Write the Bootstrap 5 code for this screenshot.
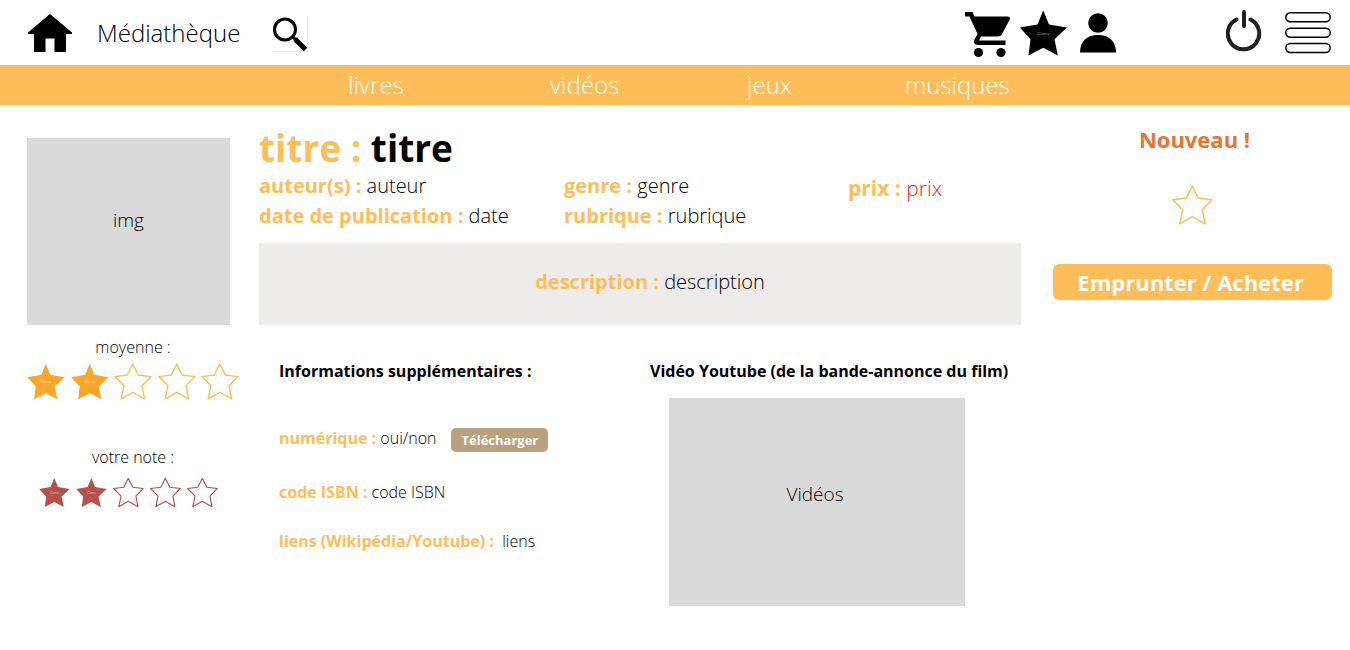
<!DOCTYPE html>
<html lang="fr">
<head>
<meta charset="utf-8">
<meta name="viewport" content="width=device-width, initial-scale=1">
<title>Médiathèque</title>
<link href="https://cdn.jsdelivr.net/npm/bootstrap@5.3.0/dist/css/bootstrap.min.css" rel="stylesheet">
<style>
  :root { --amber: #ffbd59; }
  body { font-family: "Open Sans", sans-serif; font-weight: 300; color: #000; background: #fff; }
  strong, h1, h2 { font-weight: 700; }
  svg { display: block; }
  a { color: inherit; text-decoration: none; }
  .icon-btn { border: 0; padding: 0; background: none; color: #000; }
  .topbar { height: 65px; padding: 0 19px 0 28px; }
  .brand-name { font-size: 24px; margin: 0 33px 0 25px; }
  .power { margin: 0 23px 0 110px; }
  .rubrics { background: var(--amber); color: #fff; font-size: 24px; line-height: 40px;
    display: grid; grid-template-columns: 348fr 202fr 197fr 158fr 445fr; }
  .rubrics a:first-child { grid-column: 2; }
  .page { padding: 20px 18px 40px 27px; }
  .side { width: 212px; margin-right: 20px; padding-top: 13px; }
  .placeholder-box { background: #d9d9d9; display: flex; align-items: center; justify-content: center; }
  .cover { width: 203px; height: 187px; font-size: 19px; padding-bottom: 22px; }
  .small-text { font-size: 16px; line-height: 24px; }
  .average { margin-top: 10px; }
  .own { margin-top: 45px; }
  .amber { color: var(--amber); }
  .gold { color: #f9a62b; }
  .brick, .icon-btn.brick { color: #b5514a; }
  .icon-btn.amber { color: var(--amber); }
  .own-stars { width: 179px; margin-left: 12px; }
  .main-title { font-size: 37px; line-height: 46px; }
  .facts { display: grid; grid-template-columns: 305fr 284fr 173fr; font-size: 20px; line-height: 30px; }
  .price { color: #ff1616; font-size: 21px; line-height: 34px; }
  .summary { background: #edecea; height: 82px; font-size: 20px; padding: 0 0 4px 20px; margin-top: 12px; }
  .lower { display: grid; grid-template-columns: 371fr 371fr; padding-left: 20px; padding-top: 34px; }
  .lower h2 { font-size: 16px; line-height: 24px; margin-bottom: 15px; }
  .extra { display: grid; gap: 25px; padding-top: 26px; }
  .digital { padding-bottom: 3px; }
  .video { width: 296px; height: 208px; margin-left: 19px; font-size: 19px; padding: 0 4px 16px 0; }
  .actions { width: 279px; margin-left: 32px; padding: 1px 0 0; }
  .new-tag { color: #e77432; font-size: 22px; line-height: 26px; padding-left: 4px; }
  .favourite { margin: 33px 0 39px; }
  .icon-btn.buy { background: var(--amber); color: #fff; font-size: 22px; line-height: 36px; border-radius: 6px; padding-right: 4px; }
  .icon-btn.download { background: #b9a17e; color: #fff; font-size: 13px; line-height: 24px; padding: 0 10px; border-radius: 5px; margin: 4px 0 0 15px; }
</style>
</head>
<body>
<svg class="d-none" aria-hidden="true">
  <symbol id="star-full" viewBox="0 0 48 46">
    <path fill="currentColor" d="M23.7.5 29.5 14.5 47.5 17.5 35 29.3 38.3 45.5 23.7 37.7 9 45.5 11 29.3.3 17.5 18 14.5Z"/>
    <text x="24" y="25" text-anchor="middle" font-family="Liberation Serif, serif" font-style="italic" font-size="5" fill="#fff" fill-opacity=".6">Canva</text>
  </symbol>
  <symbol id="star-line" viewBox="0 0 41 40">
    <path fill="none" stroke="currentColor" stroke-width="1.5" stroke-linejoin="round" d="M20.2 1.2 26.2 13 40 14.7 30.3 24.7 33 38.8 20.2 31.7 7.7 38.8 10.7 24.7.8 14.7 14.3 13Z"/>
  </symbol>
</svg>

<header>
  <div class="topbar d-flex align-items-center">
    <a href="#" aria-label="Accueil"><svg width="44" height="38" viewBox="0 0 44 38"><path d="M22 0 44 18.5V20H38V38H26.500V24.500H17.500V38H6V20H0V18.500Z"/></svg></a>
    <a href="#" class="brand-name">Médiathèque</a>
    <button type="button" class="icon-btn pt-1" aria-label="Rechercher"><svg width="36" height="36" viewBox="0 0 36 36"><path d="M34.500 0V34.500H0" fill="none" stroke="#eee"/><circle cx="12" cy="12.500" r="10.500" fill="none" stroke="#000" stroke-width="3"/><path d="M19 19 23 23" stroke="#000" stroke-width="3"/><path d="M22 22 32.500 32.500" stroke="#000" stroke-width="5"/></svg></button>
    <nav class="d-flex align-items-center ms-auto" aria-label="Compte">
      <a href="#" class="pt-1" aria-label="Panier"><svg width="46" height="46" viewBox="0 0 46 46"><path d="M0 0H7.500L9.500 4.500H43Q46 5 44.500 8L37 22Q36 24.500 33 24.500H16L14 28.500H40.500V33H13Q7.500 32.500 9.500 27.500L12.500 22 4.500 4.500H0Z"/><circle cx="13.500" cy="40.500" r="4.600"/><circle cx="36" cy="40.500" r="4.600"/></svg></a>
      <a href="#" class="ms-2" aria-label="Favoris"><svg width="49" height="46"><use href="#star-full"/></svg></a>
      <a href="#" class="ms-2 ps-1" aria-label="Profil"><svg width="36" height="40" viewBox="0 0 36 40"><circle cx="18" cy="10" r="9.800"/><path d="M0 39.500C0 28 7 22 18 22S36 28 36 39.500Z"/></svg></a>
      <button type="button" class="icon-btn power pb-1" aria-label="Déconnexion"><svg width="36" height="42" viewBox="0 0 36 42"><path d="M10.500 9.500A15.700 15.700 0 1 0 24.500 9.500M18 2V16" fill="none" stroke="#231f20" stroke-width="4" stroke-linecap="round"/></svg></button>
      <button type="button" class="icon-btn" aria-label="Menu"><svg width="46" height="42" viewBox="0 0 46 42"><g fill="none" stroke="#000" stroke-width="1.500"><rect x=".8" y=".8" width="44.400" height="9" rx="4.500"/><rect x=".8" y="16.300" width="44.400" height="9" rx="4.500"/><rect x=".8" y="31.500" width="44.400" height="9" rx="4.500"/></g></svg></button>
    </nav>
  </div>
  <nav class="rubrics" aria-label="Rubriques">
    <a href="#">livres</a><a href="#">vidéos</a><a href="#">jeux</a><a href="#">musiques</a>
  </nav>
</header>

<main class="page d-flex">
  <aside class="side flex-shrink-0">
    <div class="placeholder-box cover">img</div>
    <div class="small-text text-center average">moyenne :</div>
    <div class="d-flex justify-content-between mt-1" role="img" aria-label="2 sur 5">
      <svg width="38" height="37" class="gold"><use href="#star-full"/></svg>
      <svg width="38" height="37" class="gold"><use href="#star-full"/></svg>
      <svg width="38" height="37" class="amber"><use href="#star-line"/></svg>
      <svg width="38" height="37" class="amber"><use href="#star-line"/></svg>
      <svg width="38" height="37" class="amber"><use href="#star-line"/></svg>
    </div>
    <div class="small-text text-center own">votre note :</div>
    <div class="own-stars d-flex justify-content-between mt-2" role="group" aria-label="Votre note">
      <button type="button" class="icon-btn brick" aria-label="1 étoile"><svg width="31" height="31"><use href="#star-full"/></svg></button>
      <button type="button" class="icon-btn brick" aria-label="2 étoiles"><svg width="31" height="31"><use href="#star-full"/></svg></button>
      <button type="button" class="icon-btn brick" aria-label="3 étoiles"><svg width="31" height="31"><use href="#star-line"/></svg></button>
      <button type="button" class="icon-btn brick" aria-label="4 étoiles"><svg width="31" height="31"><use href="#star-line"/></svg></button>
      <button type="button" class="icon-btn brick" aria-label="5 étoiles"><svg width="31" height="31"><use href="#star-line"/></svg></button>
    </div>
  </aside>

  <article class="flex-grow-1">
    <h1 class="main-title mb-0"><span class="amber">titre :</span> titre</h1>
    <div class="facts">
      <div>
        <div><strong class="amber">auteur(s) :</strong> auteur</div>
        <div><strong class="amber">date de publication :</strong> date</div>
      </div>
      <div>
        <div><strong class="amber">genre :</strong> genre</div>
        <div><strong class="amber">rubrique :</strong> rubrique</div>
      </div>
      <div class="price"><strong class="amber">prix :</strong> prix</div>
    </div>
    <div class="summary d-flex align-items-center justify-content-center"><div><strong class="amber">description :</strong> description</div></div>
    <div class="lower">
      <section class="small-text">
        <h2>Informations supplémentaires :</h2>
        <div class="extra">
          <div class="digital d-flex align-items-center"><div><strong class="amber">numérique :</strong> oui/non</div><button type="button" class="icon-btn download fw-bold">Télécharger</button></div>
          <div><strong class="amber">code ISBN :</strong> code ISBN</div>
          <div><strong class="amber">liens (Wikipédia/Youtube) :</strong>&nbsp; <a href="#">liens</a></div>
        </div>
      </section>
      <section>
        <h2 class="text-nowrap">Vidéo Youtube (de la bande-annonce du film)</h2>
        <div class="placeholder-box video">Vidéos</div>
      </section>
    </div>
  </article>

  <aside class="actions flex-shrink-0 text-center">
    <div class="new-tag fw-bold">Nouveau !</div>
    <button type="button" class="icon-btn amber favourite" aria-label="Ajouter aux favoris"><svg width="41" height="40"><use href="#star-line"/></svg></button>
    <button type="button" class="icon-btn buy fw-bold w-100">Emprunter / Acheter</button>
  </aside>
</main>
<script src="https://cdn.jsdelivr.net/npm/bootstrap@5.3.0/dist/js/bootstrap.bundle.min.js"></script>
</body>
</html>
